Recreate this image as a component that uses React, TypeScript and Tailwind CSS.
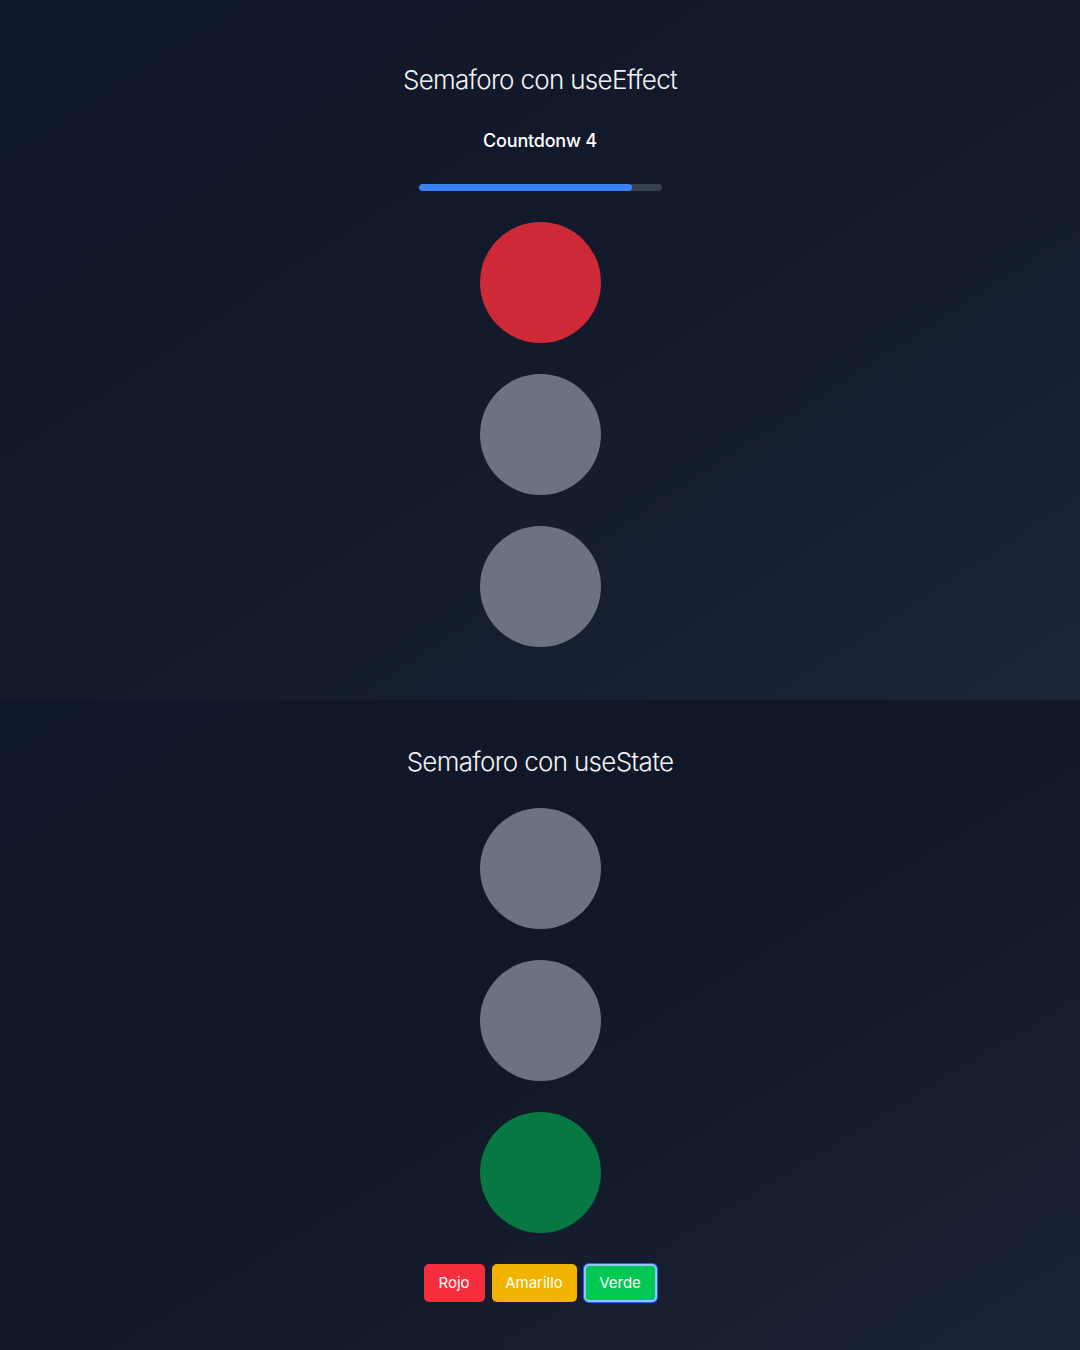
import React from "react";

const font = { fontFamily: "Inter, 'Noto Sans', sans-serif" };

function Light({ color }: { color: string }) {
  return <div className={`w-[121px] h-[121px] rounded-full ${color}`} />;
}

export default function App() {
  return (
    <div style={font} className="w-[1080px] text-white">
      <section className="h-[700px] bg-gradient-to-br from-[#0f172a] via-[#121a2b] to-[#1c2638] flex flex-col items-center pt-[63px]">
        <h1 className="text-[26px] leading-[34px] font-light tracking-[-0.7px] text-gray-100">Semaforo con useEffect</h1>
        <p className="mt-[33px] text-[18px] leading-[22px] font-medium tracking-[-0.2px]">Countdonw 4</p>
        <div className="mt-[32px] w-[243px] h-[7px] rounded-full bg-[#374151] overflow-hidden">
          <div className="h-full w-[88%] rounded-full bg-[#3b82f6]" />
        </div>
        <div className="mt-[31px] flex flex-col gap-[31px]">
          <Light color="bg-[#cd2936]" />
          <Light color="bg-[#6b7280]" />
          <Light color="bg-[#6b7280]" />
        </div>
      </section>
      <section className="h-[650px] bg-gradient-to-br from-[#0f172a] via-[#111827] to-[#1b2437] flex flex-col items-center pt-[45px]">
        <h1 className="text-[26px] leading-[34px] font-light tracking-[-0.7px] text-gray-100">Semaforo con useState</h1>
        <div className="mt-[29px] flex flex-col gap-[31px]">
          <Light color="bg-[#6b7280]" />
          <Light color="bg-[#6b7280]" />
          <Light color="bg-[#077844]" />
        </div>
        <div className="mt-[31px] flex gap-[7px] text-[15px]">
          <button className="h-[38px] w-[61px] rounded-[5px] bg-[#f52e3d] text-white">Rojo</button>
          <button className="h-[38px] w-[85px] rounded-[5px] bg-[#f0b400] text-white">Amarillo</button>
          <button className="h-[38px] w-[73px] rounded-[5px] bg-[#00c853] text-white border-2 border-[#93c5fd] ring-1 ring-[#2563eb]">Verde</button>
        </div>
      </section>
    </div>
  );
}
